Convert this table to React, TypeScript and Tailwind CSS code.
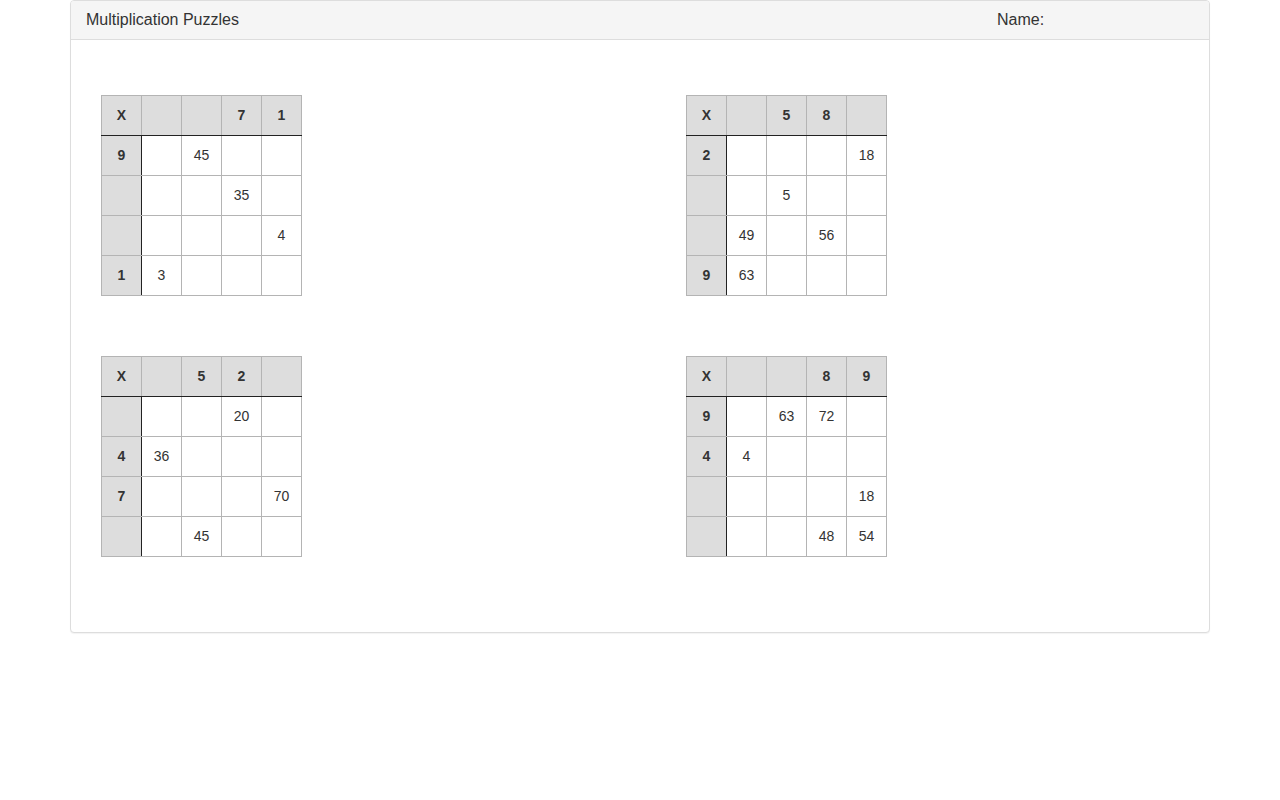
import React from "react";

type Grid = { top: string[]; rows: { h: string; c: string[] }[] };

const puzzles: Grid[] = [
  {
    top: ["", "", "7", "1"],
    rows: [
      { h: "9", c: ["", "45", "", ""] },
      { h: "", c: ["", "", "35", ""] },
      { h: "", c: ["", "", "", "4"] },
      { h: "1", c: ["3", "", "", ""] },
    ],
  },
  {
    top: ["", "5", "8", ""],
    rows: [
      { h: "2", c: ["", "", "", "18"] },
      { h: "", c: ["", "5", "", ""] },
      { h: "", c: ["49", "", "56", ""] },
      { h: "9", c: ["63", "", "", ""] },
    ],
  },
  {
    top: ["", "5", "2", ""],
    rows: [
      { h: "", c: ["", "", "20", ""] },
      { h: "4", c: ["36", "", "", ""] },
      { h: "7", c: ["", "", "", "70"] },
      { h: "", c: ["", "45", "", ""] },
    ],
  },
  {
    top: ["", "", "8", "9"],
    rows: [
      { h: "9", c: ["", "63", "72", ""] },
      { h: "4", c: ["4", "", "", ""] },
      { h: "", c: ["", "", "", "18"] },
      { h: "", c: ["", "", "48", "54"] },
    ],
  },
];

function Puzzle({ g }: { g: Grid }) {
  return (
    <table className="border-collapse text-[14px] text-[#333] w-[201px]">
      <tbody>
        <tr>
          <th className="w-[40px] h-[40px] p-0 bg-[#dddddd] border border-[#b4b4b4] border-b-[#222] font-bold text-center">X</th>
          {g.top.map((t, i) => (
            <th key={i} className="w-[40px] h-[40px] p-0 bg-[#dddddd] border border-[#b4b4b4] border-b-[#222] font-bold text-center">
              {t}
            </th>
          ))}
        </tr>
        {g.rows.map((r, ri) => (
          <tr key={ri}>
            <th className="w-[40px] h-[40px] p-0 bg-[#dddddd] border border-[#b4b4b4] border-r-[#222] font-bold text-center">{r.h}</th>
            {r.c.map((c, ci) => (
              <td key={ci} className="w-[40px] h-[40px] p-0 border border-[#b4b4b4] text-center">
                {c}
              </td>
            ))}
          </tr>
        ))}
      </tbody>
    </table>
  );
}

export default function App() {
  return (
    <div className="min-h-[800px] bg-white" style={{ fontFamily: '"Liberation Sans", Arial, sans-serif' }}>
      <div className="mx-auto w-[1140px] border border-[#dddddd] rounded-[4px] shadow-[0_1px_1px_rgba(0,0,0,0.05)] bg-white">
        <div className="h-[39px] bg-[#f5f5f5] border-b border-[#dddddd] rounded-t-[3px] flex items-center px-[15px] text-[16px] text-[#333]">
          <div className="flex-1">Multiplication Puzzles</div>
          <div className="w-[197px]">Name:</div>
        </div>
        <div className="pl-[30px] pt-[55px] pb-[75px] grid grid-cols-[585px_585px] gap-y-[60px]">
          {puzzles.map((p, i) => (
            <Puzzle key={i} g={p} />
          ))}
        </div>
      </div>
    </div>
  );
}
